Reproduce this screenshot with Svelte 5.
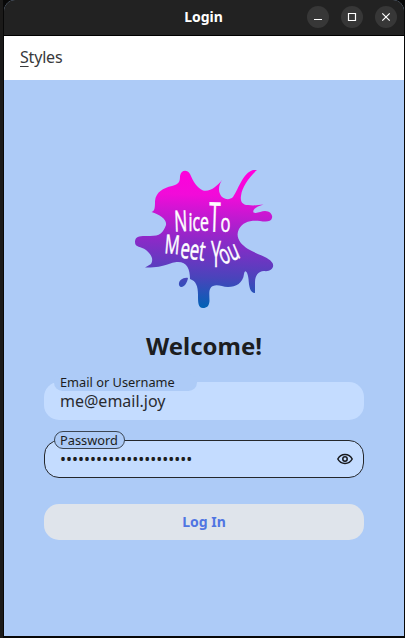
<script>
  let email = $state('me@email.joy');
  const masked = '•'.repeat(22);
</script>

<main class="desktop">
  <section class="window">
    <header class="titlebar">
      <h1>Login</h1>
      <div class="controls">
        <button aria-label="Minimize"><svg viewBox="0 0 22 22"><path d="M7 13.5h8" /></svg></button>
        <button aria-label="Maximize"><svg viewBox="0 0 22 22"><path d="M7.5 7.5h7v7h-7z" /></svg></button>
        <button aria-label="Close"><svg viewBox="0 0 22 22"><path d="M7.3 7.3l7.4 7.4M14.7 7.3l-7.4 7.4" /></svg></button>
      </div>
    </header>
    <nav><span class="mnemonic">S</span>tyles</nav>
    <div class="content">
      <svg class="logo" viewBox="134 168 140 141" role="img" aria-label="Nice To Meet You">
        <defs>
          <linearGradient id="splash" gradientUnits="userSpaceOnUse" x1="204" y1="170" x2="200" y2="308">
            <stop offset="0" stop-color="#ff00dc" />
            <stop offset=".18" stop-color="#f20bd9" />
            <stop offset=".5" stop-color="#8f28c8" />
            <stop offset=".78" stop-color="#4944bb" />
            <stop offset="1" stop-color="#0062b5" />
          </linearGradient>
        </defs>
        <g fill="url(#splash)">
          <path d="M180 176C181 170 187 169 190 174C193 181 197 188 203 190.500C211 192 217 186 222.500 179.500C219 184 218 190 220 194C222 199 229 201 233 197C239 188 243 173 253 170H257C249 177 242 187 241 196C240 202 243 205 248 205C254 206 258 205 263.500 204.500C258 206 252 209 253.500 212.500C257 214 261 211 265 211C270 211 273 215 272 218C271 222 266 222 260 221C250 220 243 222 239 229C235 237 240 244 248 249C256 254 269 257 272.500 263C275 268 270 272 264 271C258 271 255 276 255 282L255 293C250 293 249 286 248.500 279C248 273 245 268 244 274C243 283 236 287 228 287C222 287 218 284 213 286C208 288 209.500 295 209.500 301C209 306 207 308 203 308C198 308 198 302 198 295C198 286 196 281 190 279C190 269 187 262 178 262C170 262 165 268 145 267.500L151 264C154 259 151 254 146 250C141 246 135 248 135 242C135 235 142 236 150 236C160 236 163 233 166 225C167 219 160 215 151.500 212C155 211 155 207 155 201C156 192 163 188 172 186C179 184 180 182 180 176Z" />
          <path d="M188 278C184 277 178 280 179 285C181 290 187 285 188 278Z" />
        </g>
        <g class="lettering">
          <text transform="translate(174.500 231.500) rotate(-2) scale(.6 1)" font-size="29">N</text>
          <text transform="translate(188.500 231) scale(.72 1.15)" font-size="22">ice</text>
          <text transform="translate(208.500 231.500) rotate(2) scale(.5 1)" font-size="41">T</text>
          <text transform="translate(220.500 231.500) scale(.72 1.1)" font-size="23">o</text>
          <text transform="translate(164 253) rotate(5) scale(.64 1)" font-size="26">M</text>
          <text transform="translate(179.500 257.500) rotate(8) scale(.67 1.1)" font-size="25">eet</text>
          <text transform="translate(211 267) scale(.48 1)" font-size="37">Y</text>
          <text transform="translate(223 265) rotate(-23) scale(.68 1.15)" font-size="24">ou</text>
        </g>
      </svg>
      <h2>Welcome!</h2>
      <div class="field">
        <label class="chip wide" for="email">Email or Username</label>
        <input id="email" bind:value={email} />
      </div>
      <div class="field outlined">
        <span class="chip">Password</span>
        <span class="dots">{masked}</span>
        <svg class="eye" viewBox="0 0 16 12"><path d="M.8 6C4 0 12 0 15.200 6C12 12 4 12 .8 6Z" /><circle cx="8" cy="6" r="2.200" /></svg>
      </div>
      <button class="login">Log In</button>
    </div>
  </section>
</main>

<style>
  :global(body) { margin: 0; }
  * { box-sizing: border-box; }
  .desktop {
    width: 405px;
    height: 638px;
    padding: 0 1px 2px 4px;
    overflow: hidden;
    background: #080808;
    box-shadow: inset 3px 0 #1b1a19;
    font-family: "Noto Sans", sans-serif;
    color: #1c1d20;
  }
  .window {
    display: flex;
    flex-direction: column;
    height: 636px;
    overflow: hidden;
    border-radius: 11px 11px 0 0;
    background: #adcbf7;
  }
  .titlebar {
    display: grid;
    grid-template-columns: 1fr auto 1fr;
    align-items: center;
    height: 36px;
    padding: 0 7px 2px 0;
    border-bottom: 1px solid #000;
    background: #222;
  }
  h1 {
    grid-column: 2;
    margin: 0 0 0 6px;
    color: #fff;
    font-size: 14px;
    line-height: 20px;
    font-weight: 700;
  }
  .controls { display: flex; justify-content: flex-end; gap: 12px; }
  .controls button {
    width: 22px;
    height: 22px;
    padding: 0;
    border: 0;
    border-radius: 50%;
    background: #373737;
  }
  .controls svg { display: block; fill: none; stroke: #fff; stroke-width: 1.2; }
  nav {
    flex: none;
    height: 44px;
    padding: 9px 16px;
    background: #fff;
    color: #38393b;
    font-size: 16px;
    line-height: 24px;
    letter-spacing: -.2px;
  }
  .mnemonic { text-decoration: underline; text-underline-offset: 3px; text-decoration-thickness: 1px; }
  .content { display: flex; flex-direction: column; padding: 88px 40px 0; }
  .logo { width: 140px; height: 141px; margin-left: 90px; }
  .lettering { fill: #fff; stroke: #fff; stroke-width: .5; font-family: "Open Sans", sans-serif; font-style: normal; font-weight: 500; }
  h2 {
    height: 34px;
    margin: 20px 0 19px;
    text-align: center;
    font-size: 24px;
    line-height: 34px;
  }
  .field {
    position: relative;
    display: flex;
    align-items: center;
    height: 38px;
    padding: 0 10px 0 16px;
    border-radius: 15px;
    background: #c4dcff;
    font-size: 16px;
  }
  input {
    width: 100%;
    padding: 0;
    border: 0;
    outline: 0;
    background: transparent;
    color: #292b30;
    font: 16px/24px "Noto Sans", sans-serif;
  }
  .chip {
    position: absolute;
    top: -8px;
    left: 10px;
    height: 17px;
    padding: 0 6px;
    border-radius: 9px;
    background: #adcbf7;
    font-size: 12.8px;
    line-height: 17px;
    white-space: nowrap;
  }
  .wide { width: 143px; }
  .outlined { margin-top: 20px; border: 1px solid #24272c; padding: 0 10px 0 15px; }
  .outlined .chip { top: -10px; left: 9px; height: 18px; padding: 0 6px 0 5px; border: 1px solid #3b4654; line-height: 17px; }
  .dots { flex: 1; font-size: 16px; line-height: 24px; letter-spacing: 0; }
  .eye { width: 16px; height: 12px; fill: none; stroke: #17191d; stroke-width: 1.5; }
  .login {
    height: 36px;
    margin-top: 26px;
    padding: 0;
    border: 0;
    border-radius: 15px;
    background: #dfe4eb;
    color: #5075e2;
    font: 700 14px/20px "Noto Sans", sans-serif;
  }
</style>
